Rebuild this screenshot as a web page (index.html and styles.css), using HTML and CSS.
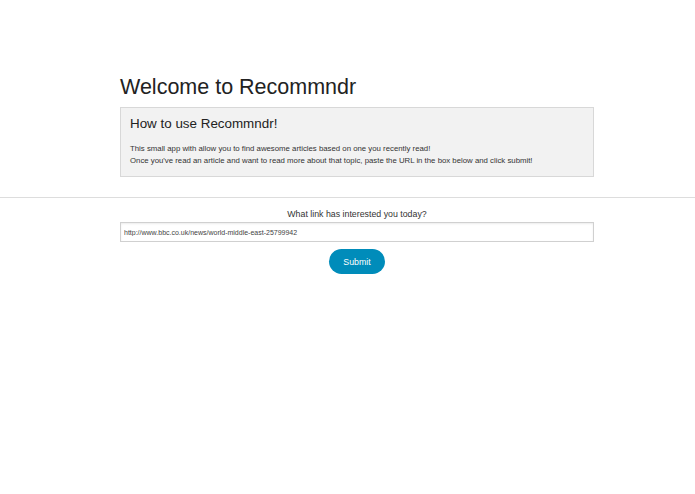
FILE: index.html
```html
<!DOCTYPE html>
<html lang="en">
<head>
    <meta charset="UTF-8">
    <meta name="viewport" content="width=device-width, initial-scale=1.0">
    <title>Recommndr</title>
    <link rel="stylesheet" href="styles.css">
</head>
<body>
    <div class="row">
        <h1>Welcome to Recommndr</h1>
        <div class="panel">
            <h3>How to use Recommndr!</h3>
            <p>This small app with allow you to find awesome articles based on one you recently read!<br>
            Once you've read an article and want to read more about that topic, paste the URL in the box below and click submit!</p>
        </div>
    </div>

    <hr>

    <form class="row">
        <label for="url">What link has interested you today?</label>
        <input type="text" id="url" name="url" value="http://www.bbc.co.uk/news/world-middle-east-25799942">
        <div class="actions">
            <input type="button" class="button" value="Submit">
        </div>
    </form>
</body>
</html>
```

FILE: styles.css
```css
body {
    font-family: "Liberation Sans", Arial, sans-serif;
    margin: 0;
    padding: 0;
    background-color: #fff;
    color: #222;
}
.row {
    width: 474px;
    margin: 0 0 0 120px;
}
h1 {
    font-size: 21.5px;
    font-weight: normal;
    line-height: 26px;
    margin: 74px 0 7px;
}
.panel {
    background-color: #f2f2f2;
    border: 1px solid #d8d8d8;
    padding: 7px 9px 9px;
}
.panel h3 {
    font-size: 13.4px;
    font-weight: normal;
    line-height: 17px;
    margin: 0 0 11px;
}
.panel p {
    font-size: 7.8px;
    line-height: 12px;
    color: #333;
    margin: 0;
}
hr {
    border: 0;
    border-top: 1px solid #ddd;
    margin: 20px 0 0;
}
form {
    display: flex;
    flex-direction: column;
}
label {
    font-size: 8.8px;
    line-height: 12px;
    color: #333;
    text-align: center;
    margin: 10px 0 2px;
}
#url {
    font-family: "Liberation Sans", Arial, sans-serif;
    font-size: 7px;
    color: #444;
    height: 20px;
    box-sizing: border-box;
    border: 1px solid #d0d0d0;
    padding: 0 3px;
    margin: 0;
    box-shadow: inset 0 1px 2px rgba(0, 0, 0, 0.08);
}
.actions {
    display: flex;
    justify-content: center;
    margin-top: 7px;
}
.button {
    font-family: "Liberation Sans", Arial, sans-serif;
    font-size: 8.8px;
    color: #fff;
    background-color: #008cba;
    border: 0;
    border-radius: 1000px;
    width: 56px;
    height: 25px;
    padding: 0;
}
```
